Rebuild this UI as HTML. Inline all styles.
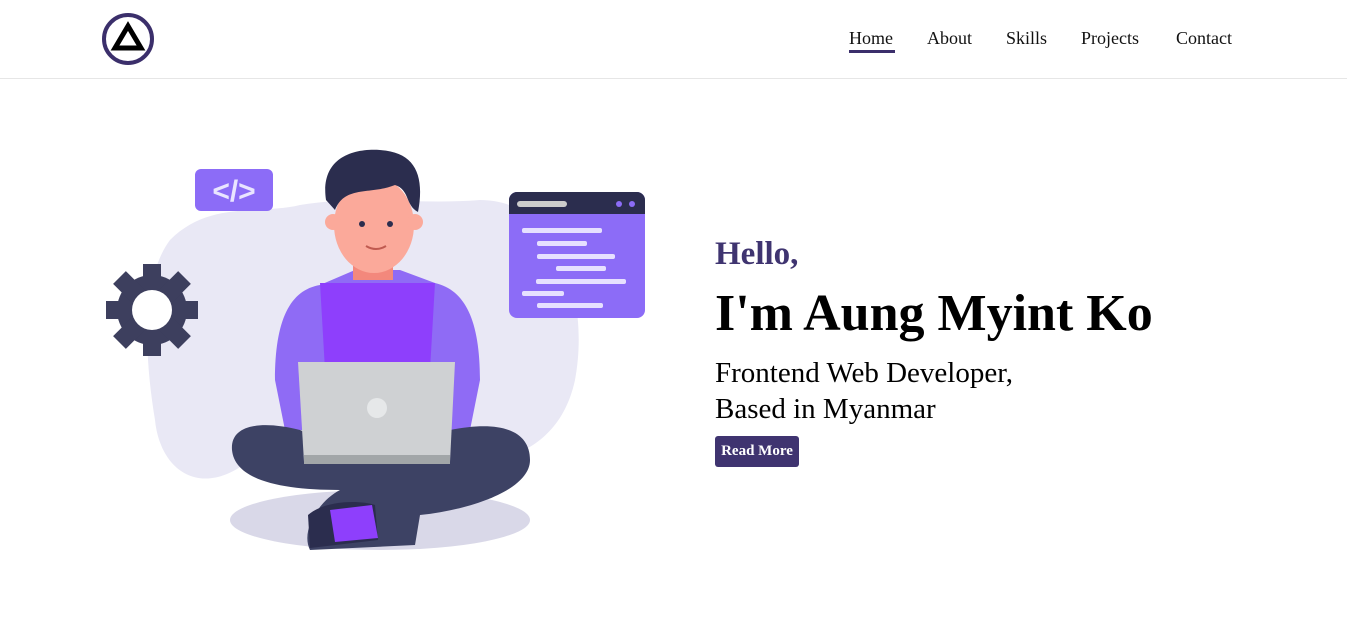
<!DOCTYPE html>
<html><head><meta charset="utf-8"><style>
*{margin:0;padding:0;box-sizing:border-box}
body{width:1347px;height:618px;background:#fff;font-family:"Liberation Serif",serif;position:relative;overflow:hidden}
header{position:absolute;left:0;top:0;width:1347px;height:79px;border-bottom:1px solid #e6e6e6}
nav a{position:absolute;top:28px;font-size:18px;color:#111;text-decoration:none}
.t{position:absolute;left:715px;white-space:nowrap}
</style></head><body>
<header>
<svg style="position:absolute;left:101px;top:13px" width="54" height="54" viewBox="0 0 54 54"><circle cx="27" cy="26" r="24" fill="none" stroke="#3b2f6b" stroke-width="4"/><path d="M27 13 L40 35 L14 35 Z" fill="none" stroke="#000" stroke-width="5" stroke-linejoin="miter"/></svg>
<nav>
<a style="left:849px">Home</a>
<div style="position:absolute;left:849px;top:50px;width:46px;height:3px;background:#3b2f6b"></div>
<a style="left:927px">About</a>
<a style="left:1006px">Skills</a>
<a style="left:1081px">Projects</a>
<a style="left:1176px">Contact</a>
</nav>
</header>
<svg style="position:absolute;left:0;top:0" width="700" height="618" viewBox="0 0 700 618">
<path d="M170 240 C210 200 260 215 300 205 C360 195 420 205 480 200 C560 200 590 300 575 380 C560 450 500 470 440 460 L250 460 C200 500 160 470 155 420 C145 360 140 280 170 240Z" fill="#e9e8f5"/>
<ellipse cx="380" cy="520" rx="150" ry="30" fill="#d9d8e8"/>
<rect x="195" y="169" width="78" height="42" rx="6" fill="#8c6cf7"/>
<text x="234" y="201" font-family="Liberation Sans,sans-serif" font-size="30" font-weight="bold" fill="#e9e5ff" text-anchor="middle">&lt;/&gt;</text>
<g transform="translate(152 310)" fill="#3d3f5e">
<circle r="35"/>
<g><rect x="-9" y="-46" width="18" height="92"/><rect x="-46" y="-9" width="92" height="18"/><rect x="-9" y="-46" width="18" height="92" transform="rotate(45)"/><rect x="-9" y="-46" width="18" height="92" transform="rotate(-45)"/></g>
<circle r="20" fill="#fff"/>
</g>
<rect x="509" y="192" width="136" height="126" rx="8" fill="#8c6cf7"/>
<path d="M509 200a8 8 0 0 1 8-8h120a8 8 0 0 1 8 8v14H509Z" fill="#2b2d4e"/>
<rect x="517" y="201" width="50" height="6" rx="3" fill="#ccc"/>
<circle cx="619" cy="204" r="3" fill="#8c6cf7"/><circle cx="632" cy="204" r="3" fill="#8c6cf7"/>
<g fill="#e6e0ff"><rect x="522" y="228" width="80" height="5" rx="2"/><rect x="537" y="241" width="50" height="5" rx="2"/><rect x="537" y="254" width="78" height="5" rx="2"/><rect x="556" y="266" width="50" height="5" rx="2"/><rect x="536" y="279" width="90" height="5" rx="2"/><rect x="522" y="291" width="42" height="5" rx="2"/><rect x="537" y="303" width="66" height="5" rx="2"/></g>
<path d="M320 285 C290 290 275 320 275 380 L285 430 L470 430 L480 380 C480 320 465 290 435 283 L400 270 L355 270Z" fill="#8f6bf5"/>
<path d="M320 283 L435 283 L430 370 L325 370Z" fill="#8e3ffc"/>
<path d="M232 450 C230 425 260 420 300 430 L375 460 L450 430 C500 420 530 430 530 460 C530 490 470 510 420 515 L415 545 L310 550 C300 530 320 500 340 490 C280 490 235 480 232 450Z" fill="#3d4264"/>
<path d="M308 515 C325 500 360 500 375 505 L378 540 L310 548Z" fill="#2b2d4e"/>
<path d="M330 510 L372 505 L378 538 L335 542Z" fill="#8e3ffc"/>
<path d="M298 362 L455 362 L450 462 L304 462Z" fill="#cfd1d3"/>
<rect x="304" y="455" width="146" height="9" fill="#a2a6a8"/>
<circle cx="377" cy="408" r="10" fill="#e6e8e9"/>
<rect x="353" y="250" width="40" height="30" fill="#f3887c"/>
<ellipse cx="374" cy="225" rx="40" ry="48" fill="#fba99a"/>
<circle cx="333" cy="222" r="8" fill="#fba99a"/><circle cx="415" cy="222" r="8" fill="#fba99a"/>
<path d="M326 200 C320 160 350 148 380 150 C415 152 425 175 418 212 C405 205 410 190 395 185 C370 195 345 185 335 210Z" fill="#2b2d4e"/>
<circle cx="362" cy="224" r="3" fill="#2b2d4e"/><circle cx="390" cy="224" r="3" fill="#2b2d4e"/>
<path d="M366 246 Q376 252 386 246" stroke="#c05a50" stroke-width="2" fill="none"/>
</svg>
<div class="t" style="top:236px;font-size:33px;font-weight:bold;color:#3f3470">Hello,</div>
<div class="t" style="top:284px;font-size:52px;font-weight:bold;color:#000">I'm Aung Myint Ko</div>
<div class="t" style="top:357px;font-size:29px;color:#000">Frontend Web Developer,</div>
<div class="t" style="top:393px;font-size:29px;color:#000">Based in Myanmar</div>
<div class="t" style="top:436px;width:84px;height:31px;background:#3f3470;border-radius:3px;color:#fff;font-size:15px;font-weight:bold;text-align:center;line-height:31px">Read More</div>
</body></html>
